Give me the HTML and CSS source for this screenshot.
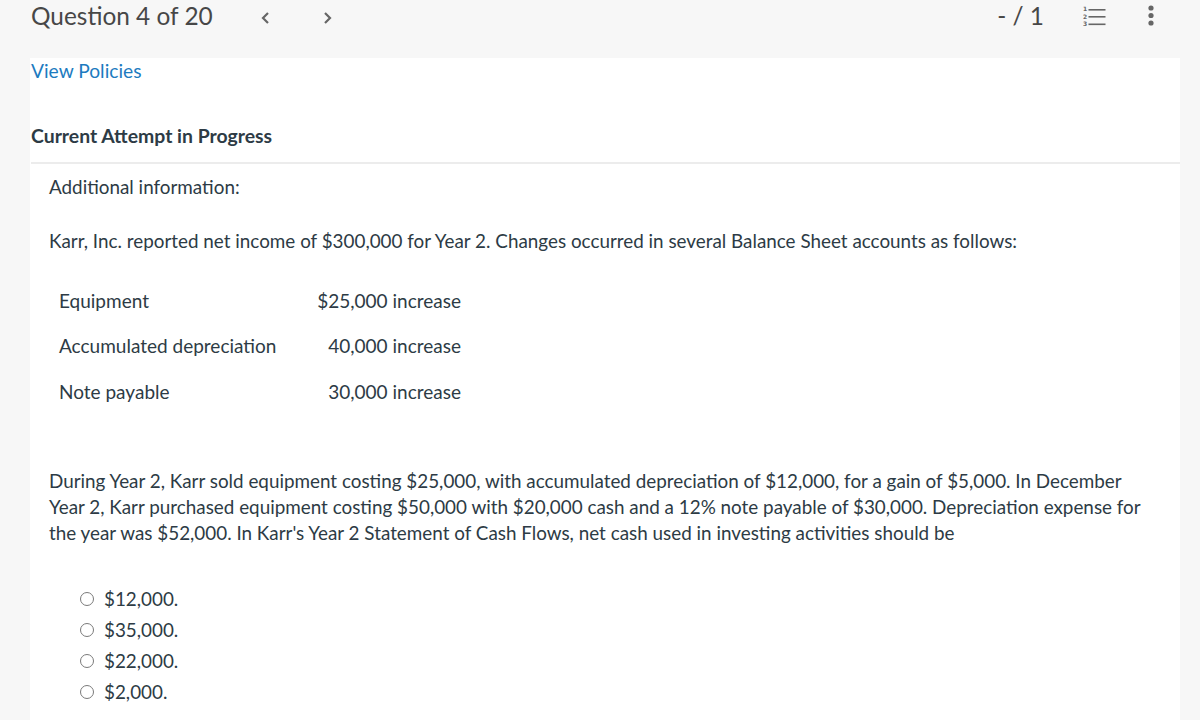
FILE: index.html
```html
<!DOCTYPE html>
<html>
<head>
<meta charset="utf-8">
<link rel="stylesheet" href="styles.css">
</head>
<body>
<header class="topbar">
  <div class="qtitle">Question 4 of 20</div>
  <div class="navs">
    <span class="nav"><svg width="12" height="14" viewBox="0 0 12 14"><path d="M8 2 L3 7 L8 12" fill="none" stroke="#666" stroke-width="2.2"/></svg></span>
    <span class="nav"><svg width="12" height="14" viewBox="0 0 12 14"><path d="M4 2 L9 7 L4 12" fill="none" stroke="#666" stroke-width="2.2"/></svg></span>
  </div>
  <div class="spacer"></div>
  <div class="score">- / 1</div>
  <div class="listicon">
    <svg width="24" height="22" viewBox="0 0 24 22">
      <text x="0" y="6" class="num">1</text>
      <text x="0" y="13.5" class="num">2</text>
      <text x="0" y="21" class="num">3</text>
      <rect x="5.5" y="4" width="17" height="1.6" fill="#666"/>
      <rect x="5.5" y="11" width="17" height="1.6" fill="#666"/>
      <rect x="5.5" y="18.5" width="17" height="1.6" fill="#666"/>
    </svg>
  </div>
  <div class="kebab">
    <svg width="8" height="24" viewBox="0 0 8 24">
      <circle cx="4" cy="4" r="2.6" fill="#666"/>
      <circle cx="4" cy="11.5" r="2.6" fill="#666"/>
      <circle cx="4" cy="19" r="2.6" fill="#666"/>
    </svg>
  </div>
</header>
<main class="panel">
  <a class="policies" href="#">View Policies</a>
  <h2 class="attempt">Current Attempt in Progress</h2>
  <div class="question">
    <p class="intro">Additional information:</p>
    <p class="lead">Karr, Inc. reported net income of $300,000 for Year 2. Changes occurred in several Balance Sheet accounts as follows:</p>
    <table class="changes">
      <tr><td class="lbl">Equipment</td><td class="val">$25,000 increase</td></tr>
      <tr><td class="lbl">Accumulated depreciation</td><td class="val">40,000 increase</td></tr>
      <tr><td class="lbl">Note payable</td><td class="val">30,000 increase</td></tr>
    </table>
    <p class="body">During Year 2, Karr sold equipment costing $25,000, with accumulated depreciation of $12,000, for a gain of $5,000. In December Year 2, Karr purchased equipment costing $50,000 with $20,000 cash and a 12% note payable of $30,000. Depreciation expense for the year was $52,000. In Karr's Year 2 Statement of Cash Flows, net cash used in investing activities should be</p>
    <ul class="options">
      <li><span class="radio"></span>$12,000.</li>
      <li><span class="radio"></span>$35,000.</li>
      <li><span class="radio"></span>$22,000.</li>
      <li><span class="radio"></span>$2,000.</li>
    </ul>
  </div>
</main>
</body>
</html>
```
FILE: styles.css
```css
html, body {
  margin: 0;
  padding: 0;
}
body {
  background: #f7f7f7;
  font-family: Lato, "Open Sans", sans-serif;
  color: #2d3b45;
  width: 1200px;
  height: 720px;
  overflow: hidden;
}
.topbar {
  height: 58px;
  display: flex;
  align-items: flex-start;
  padding: 0 0 0 31px;
  box-sizing: border-box;
  color: #474747;
}
.qtitle {
  font-size: 24.4px;
  line-height: 32px;
}
.navs {
  display: flex;
  gap: 49px;
  margin-left: 47px;
  margin-top: 9px;
}
.nav {
  display: block;
  width: 12px;
  height: 14px;
}
.spacer { flex: 1; }
.score {
  font-size: 24.4px;
  line-height: 32px;
  margin-right: 39px;
}
.listicon {
  margin-top: 5px;
  margin-right: 40px;
}
.num {
  font-family: "DejaVu Sans", sans-serif;
  font-size: 6px;
  font-weight: bold;
  fill: #666;
}
.kebab {
  margin-top: 4px;
  margin-right: 45px;
}
.panel {
  display: block;
  margin-left: 30px;
  width: 1150px;
  background: #fff;
  height: 662px;
  padding-top: 1px;
  box-sizing: border-box;
}
.policies {
  display: block;
  margin: 0 0 0 1px;
  font-size: 19.2px;
  line-height: 24px;
  color: #1d7bbf;
  text-decoration: none;
}
.attempt {
  margin: 41px 0 0 1px;
  font-size: 19.4px;
  line-height: 24px;
  font-weight: bold;
  color: #2d3b45;
  padding-bottom: 14px;
  border-bottom: 2px solid #ececec;
}
.question {
  padding-left: 19px;
  padding-right: 30px;
  font-size: 18.85px;
  line-height: 26px;
}
.intro {
  margin: 10px 0 0 0;
}
.lead {
  margin: 28px 0 0 0;
}
.changes {
  border-collapse: collapse;
  margin: 24px 0 0 10px;
  font-size: 19px;
}
.changes td {
  padding: 0;
  height: 45.5px;
  vertical-align: middle;
}
.lbl {
  width: 258px;
}
.val {
  width: 144px;
  text-align: right;
}
.body {
  margin: 53.5px 0 0 0;
}
.options {
  list-style: none;
  margin: 37.5px 0 0 0;
  padding: 0 0 0 31px;
}
.options li {
  display: flex;
  align-items: center;
  height: 31px;
}
.radio {
  width: 14px;
  height: 14px;
  border: 1.5px solid #7a7a7a;
  border-radius: 50%;
  margin-right: 10px;
  box-sizing: border-box;
  flex: none;
}
```
